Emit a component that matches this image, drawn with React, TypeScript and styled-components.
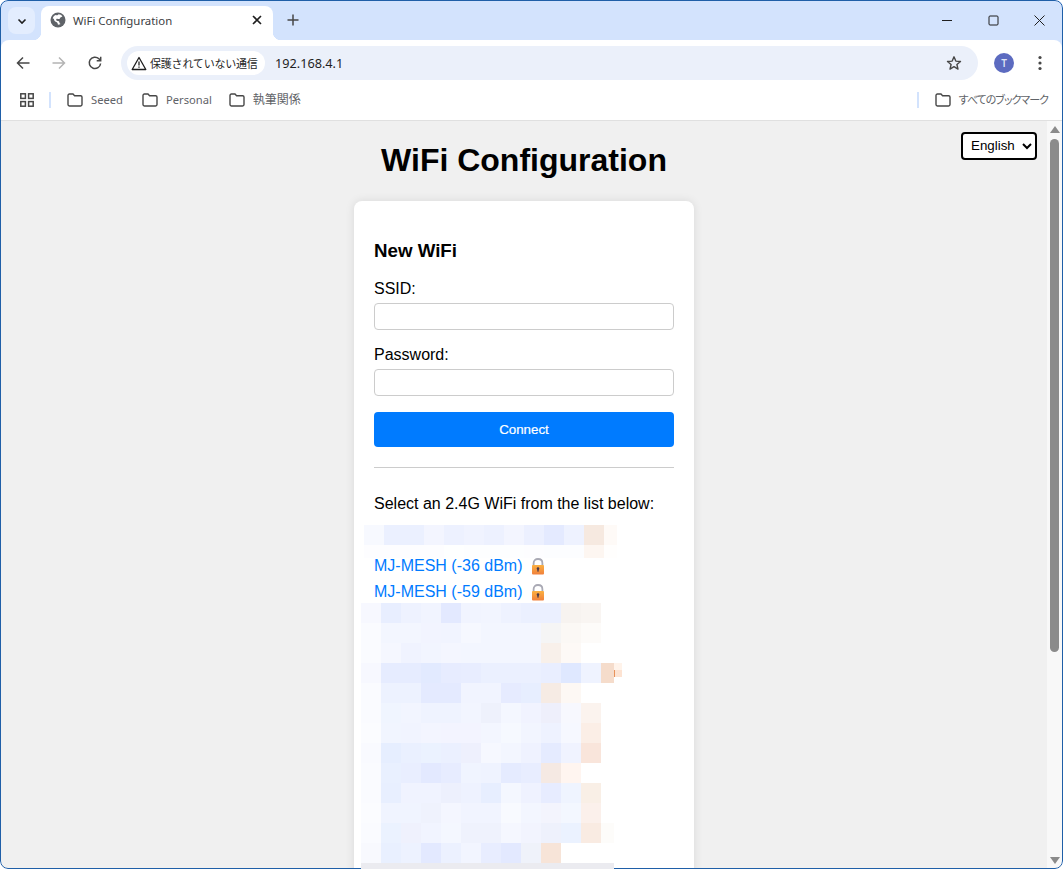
import React from 'react';
import styled, { createGlobalStyle } from 'styled-components';

const uiFont = `'Noto Sans', 'Open Sans', 'Noto Sans CJK JP', sans-serif`;
const pageFont = `'Liberation Sans', Arial, sans-serif`;

const GlobalStyle = createGlobalStyle`
  html, body {
    margin: 0;
    padding: 0;
    height: 869px;
    overflow: hidden;
    background: #fff;
  }
`;

const Window = styled.div`
  position: relative;
  width: 1063px;
  height: 869px;
  box-sizing: border-box;
  padding: 1px;
  border-radius: 8px;
  background: #d3e3fd;
  display: flex;
  flex-direction: column;
  overflow: hidden;
`;

const WindowFrame = styled.div`
  position: absolute;
  inset: 0;
  border: 1px solid #1f5fa8;
  border-radius: 8px;
  pointer-events: none;
  z-index: 1;
`;

const TitleBar = styled.div`
  height: 39px;
  flex: none;
  display: flex;
  align-items: flex-start;
`;

const TabMenu = styled.div`
  margin: 6px 0 0 7px;
  width: 27px;
  height: 27px;
  border-radius: 8px;
  background: #e3edfe;
  display: flex;
  align-items: center;
  justify-content: center;
`;

const Tab = styled.div`
  position: relative;
  margin: 5px 0 0 6px;
  width: 232px;
  height: 34px;
  box-sizing: border-box;
  padding: 0 11px 6px 9px;
  border-radius: 8px 8px 0 0;
  background: #fff;
  display: flex;
  align-items: center;
  font: 11.4px ${uiFont};
  color: #3c4043;

  &::before,
  &::after {
    content: '';
    position: absolute;
    bottom: 0;
    width: 8px;
    height: 8px;
  }
  &::before {
    left: -8px;
    background: radial-gradient(circle at 0 0, transparent 8px, #fff 8.5px);
  }
  &::after {
    right: -8px;
    background: radial-gradient(circle at 100% 0, transparent 8px, #fff 8.5px);
  }
`;

const TabTitle = styled.span`
  flex: 1;
  margin-left: 7px;
`;

const NewTab = styled.div`
  margin: 12px 0 0 13px;
  display: flex;
`;

const WindowControls = styled.div`
  margin-left: auto;
  display: flex;
`;

const WindowButton = styled.div`
  width: 46px;
  height: 39px;
  display: flex;
  align-items: center;
  justify-content: center;
`;

const Toolbar = styled.div`
  height: 40px;
  flex: none;
  background: #fff;
  border-radius: 8px 8px 0 0;
  display: flex;
  align-items: center;
  padding: 6px 0 0 14px;
  box-sizing: border-box;
`;

const NavIcon = styled.div`
  width: 36px;
  height: 24px;
  display: flex;
  align-items: center;
  justify-content: flex-start;
`;

const Omnibox = styled.div`
  margin-left: -2px;
  width: 857px;
  height: 34px;
  flex: none;
  box-sizing: border-box;
  padding: 0 16px 0 6px;
  border-radius: 17px;
  background: #ebf0fa;
  display: flex;
  align-items: center;
`;

const SecurityChip = styled.div`
  height: 24px;
  width: 138px;
  flex: none;
  box-sizing: border-box;
  padding-left: 4px;
  border-radius: 12px;
  background: #fff;
  display: flex;
  align-items: center;
  gap: 3px;
  font: 11px ${uiFont};
  letter-spacing: -0.2px;
  color: #1f1f1f;
  white-space: nowrap;

  svg {
    flex: none;
  }
`;

const Url = styled.span`
  margin-left: 10px;
  flex: 1;
  font: 12.7px ${uiFont};
  color: #1f1f1f;
`;

const Avatar = styled.div`
  margin-left: 16px;
  width: 20px;
  height: 20px;
  flex: none;
  border-radius: 50%;
  background: #5c6bc0;
  color: #dfe3f5;
  font: 600 10px/20px ${uiFont};
  text-align: center;
`;

const MoreButton = styled.div`
  margin-left: 24px;
  display: flex;
`;

const BookmarkBar = styled.div`
  height: 41px;
  flex: none;
  box-sizing: border-box;
  background: #fff;
  border-bottom: 1px solid #e0e0e0;
  display: flex;
  align-items: center;
  padding-left: 18px;
`;

const Separator = styled.div<{ $margin: string }>`
  width: 2px;
  height: 16px;
  background: #d3e3fd;
  margin: ${(p) => p.$margin};
`;

const Bookmark = styled.div<{ $gap: number; $size?: number; $tight?: boolean }>`
  display: flex;
  align-items: center;
  gap: 8px;
  margin-right: ${(p) => p.$gap}px;
  font: ${(p) => p.$size ?? 11.2}px/14px ${uiFont};
  font-feature-settings: ${(p) => (p.$tight ? "'palt'" : 'normal')};
  letter-spacing: ${(p) => (p.$tight ? '-1px' : 'normal')};
  color: #5f6368;
  white-space: nowrap;
`;

const Spacer = styled.div`
  flex: 1;
`;

const Viewport = styled.div`
  flex: 1;
  min-height: 0;
  display: flex;
  background: #f0f0f0;
`;

const Page = styled.div`
  position: relative;
  flex: 1;
  min-width: 0;
  font-family: ${pageFont};
  color: #000;
`;

const Heading = styled.h1`
  margin: 21px 0 0;
  font-size: 32px;
  line-height: 37px;
  font-weight: bold;
  text-align: center;
`;

const LanguageSelect = styled.select`
  position: absolute;
  top: 11px;
  right: 10px;
  width: 76px;
  height: 28px;
  border: 2px solid #000;
  border-radius: 4px;
  background: #fff;
  color: #000;
  font: 13.33px ${pageFont};
  padding: 0 0 2px 4px;
`;

const Card = styled.div`
  width: 340px;
  margin: 22px auto 0;
  box-sizing: border-box;
  padding: 38px 20px 0;
  height: 700px;
  background: #fff;
  border-radius: 8px;
  box-shadow: 0 0 10px rgba(0, 0, 0, 0.1);
`;

const FormTitle = styled.h2`
  margin: 0 0 18px;
  font-size: 18.72px;
  line-height: 23px;
  font-weight: bold;
`;

const FieldLabel = styled.label`
  display: block;
  font-size: 16px;
  line-height: 18px;
  margin-bottom: 5px;
`;

const TextInput = styled.input`
  display: block;
  width: 100%;
  height: 27px;
  box-sizing: border-box;
  border: 1px solid #ccc;
  border-radius: 4px;
  margin-bottom: 16px;
  background: #fff;
`;

const ConnectButton = styled.button`
  display: block;
  width: 100%;
  height: 35px;
  margin-top: 16px;
  border: none;
  border-radius: 4px;
  background: #007bff;
  color: #fff;
  font: 13.33px ${pageFont};
  -webkit-text-stroke: 0.2px #fff;
`;

const Divider = styled.hr`
  margin: 20px 0 0;
  border: none;
  border-top: 1px solid #ccc;
`;

const ListHint = styled.p`
  margin: 27px 0 12px;
  font-size: 16px;
  line-height: 18px;
`;

const Mosaic = styled.div<{ $left: number }>`
  position: relative;
  z-index: 2;
  margin-left: ${(p) => p.$left}px;
  display: flex;
  flex-direction: column;
`;

const MosaicRow = styled.div<{ $height: number }>`
  display: flex;
  height: ${(p) => p.$height}px;
`;

const MosaicCell = styled.div<{ $color: string; $width?: number }>`
  flex: none;
  width: ${(p) => p.$width ?? 20}px;
  background: #${(p) => p.$color};
`;

const MosaicNotch = styled.div`
  flex: none;
  width: 8px;
  height: 14px;
  display: flex;
  flex-direction: column;
`;

const NotchPiece = styled.div<{ $color: string; $edge?: boolean }>`
  height: 7px;
  background: #${(p) => p.$color};
  box-shadow: ${(p) => (p.$edge ? 'inset 1px 0 0 #e8925a' : 'none')};
`;

const NetworkList = styled.div`
  margin: -5px 0 -2px;
  position: relative;
`;

const NetworkLink = styled.a`
  display: flex;
  align-items: center;
  gap: 8px;
  height: 26px;
  font-size: 16px;
  color: #007bff;
  text-decoration: none;
`;

const Scrollbar = styled.div`
  width: 15px;
  flex: none;
  background: #f8f8f8;
  display: flex;
  flex-direction: column;
  align-items: center;
`;

const ScrollArrow = styled.div`
  height: 16px;
  flex: none;
  display: flex;
  align-items: center;
  justify-content: center;
`;

const ScrollThumb = styled.div`
  margin-top: 2px;
  width: 9px;
  height: 513px;
  flex: none;
  border-radius: 5px;
  background: #8b8b8b;
`;

const ScrollTrack = styled.div`
  flex: 1;
`;

const Folder = () => (
  <svg width="16" height="14" viewBox="0 0 16 14" fill="none" stroke="#474747" strokeWidth="1.4">
    <path d="M1 2.4C1 1.6 1.6 1 2.4 1H6l1.6 1.7h6c.8 0 1.4.6 1.4 1.4v7.5c0 .8-.6 1.4-1.4 1.4H2.4c-.8 0-1.4-.6-1.4-1.4z" />
  </svg>
);

const Lock = () => (
  <svg width="16" height="17" viewBox="0 0 16 17">
    <defs>
      <linearGradient id="lockBody" x1="0" y1="0" x2="0" y2="1">
        <stop offset="0" stopColor="#fbb040" />
        <stop offset="1" stopColor="#f0803c" />
      </linearGradient>
    </defs>
    <path d="M3.6 8V5.2C3.6 2.6 5.4 1 8 1s4.4 1.6 4.4 4.2V8" fill="none" stroke="#a9a9b4" strokeWidth="1.8" />
    <rect x="2" y="7" width="12" height="9.5" rx="1" fill="url(#lockBody)" />
    <circle cx="8" cy="10.6" r="1.3" fill="#4a3a4a" />
    <rect x="7.3" y="10.6" width="1.4" height="3" fill="#4a3a4a" />
  </svg>
);

const topMosaic: { height: number; cells: string[] }[] = [
  {
    height: 20,
    cells: ['f7f9ff', 'ebf0ff', 'ebf0ff', 'f3f5ff', 'edf1ff', 'f0f3ff', 'edf1ff', 'f3f5ff', 'ecf0ff', 'e4eaff', 'eef2ff', 'f6e9e0', 'fefaf7'],
  },
  {
    height: 13,
    cells: ['fdfdff', 'fdfdff', 'fdfdff', 'fdfdff', 'feffff', 'fdfeff', 'fdfeff', 'fdfeff', 'fdfdff', 'fcfdff', 'fcfdff', 'fdf6f1', 'fffefd'],
  },
];

const listMosaic: string[][] = [
  ['f7f8ff', 'e8eeff', 'eef2ff', 'f1f4ff', 'e3e9ff', 'f1f4ff', 'f2f5ff', 'eef2ff', 'ebf0ff', 'ebf0ff', 'f7f3f0', 'f9f5f2'],
  ['fafbff', 'f3f6ff', 'f3f6ff', 'f2f4ff', 'f1f4ff', 'f6f8ff', 'f3f6ff', 'f3f6ff', 'f3f6ff', 'f5f5f5', 'fbf8f5', 'fdfbf9'],
  ['fafbff', 'f5f7ff', 'f0f3ff', 'f2f5ff', 'f4f6ff', 'f3f6ff', 'f3f6ff', 'f3f6ff', 'f3f6ff', 'f8f0ea', 'fdf9f6', 'ffffff'],
  ['f7f8ff', 'e6ecff', 'e6ecff', 'e2eaff', 'e7ecff', 'e8edff', 'ebf0ff', 'ebf0ff', 'ebf0ff', 'e9eeff', 'dfe8ff', 'eff3ff', 'f5dccb'],
  ['fafbff', 'edf2ff', 'edf2ff', 'e4eaff', 'e4eaff', 'f1f4ff', 'f1f4ff', 'e6ebff', 'e7eeff', 'f6ebe4', 'fdf8f4', 'ffffff'],
  ['fafbff', 'f0f5ff', 'f2f5ff', 'eff3ff', 'eff3ff', 'f2f5ff', 'eef1fc', 'f4f7ff', 'f1f3ff', 'eeeffb', 'f7f8fe', 'fbf3ee'],
  ['fbfcff', 'f1f5ff', 'f1f4ff', 'f3f5ff', 'f3f4ff', 'f3f4ff', 'f3f6ff', 'f6f9ff', 'f2f5ff', 'eef2ff', 'f6f8ff', 'fbeee6'],
  ['f9faff', 'e6eeff', 'eaf0ff', 'ebf2ff', 'ebf0ff', 'eef0fd', 'f6f8ff', 'f3f6ff', 'eff2ff', 'e5ebff', 'f0f3ff', 'f9e5db'],
  ['fafbff', 'e9f0ff', 'e9eeff', 'e3e9ff', 'e7ecff', 'f0f4ff', 'eff3ff', 'e5ebff', 'e8edff', 'f5e9e3', 'fff5f0', 'ffffff'],
  ['fafbff', 'e8efff', 'f0f3ff', 'f0f3ff', 'edf0fd', 'eef2ff', 'e7eeff', 'f4f7ff', 'eff2ff', 'e7ecff', 'eff4ff', 'f9efe6'],
  ['fbfcff', 'f0f4ff', 'f0f4ff', 'eff2fd', 'f4f6ff', 'f1f4ff', 'f1f4ff', 'f8faff', 'f3f6ff', 'f3f4fd', 'f3f7ff', 'fbf0eb'],
  ['fafbff', 'ebf2ff', 'eff1fd', 'f1f4ff', 'f4f7ff', 'eff2fd', 'eff2fd', 'f5f7ff', 'f2f4fe', 'eef1fc', 'ebf2ff', 'f9ebe2', 'fdfcfa'],
  ['f8f9fe', 'e9f0ff', 'edf2ff', 'e3e9ff', 'ecf1ff', 'f2f5ff', 'e8edff', 'e3e9ff', 'eff2fa', 'f7e4d8', 'ffffff', 'ffffff'],
];

const App = (): JSX.Element => (
  <Window>
    <GlobalStyle />
    <WindowFrame />
    <TitleBar>
      <TabMenu>
        <svg width="12" height="12" viewBox="0 0 12 12" fill="none" stroke="#1f1f1f" strokeWidth="1.6">
          <path d="M2.5 4.5 6 8l3.5-3.5" />
        </svg>
      </TabMenu>
      <Tab>
        <svg width="16" height="16" viewBox="0 0 16 16">
          <circle cx="8" cy="8" r="7.5" fill="#5f6368" />
          <path d="M8.500 2.200c1.600.1 3 .9 3.900 2-.5.700-1.400.8-2 1.300-.5.500-.3 1.300-1 1.500-.9.200-1.700-.5-2.600-.2-.7.300-.8 1.200-.3 1.700.6.600 1.600.4 2.300.8.700.5.500 1.500 1 2.100l.8.700c-.8.500-1.700.7-2.600.7-.2-.9-.3-1.800-1-2.400-.7-.6-1.700-.6-2.300-1.300-.6-.7-.4-1.800-1.100-2.400-.3-.2-.6-.3-.9-.3.400-1.600 1.500-2.900 3-3.500.7.500 1.600.5 2.100 0 .3-.2.500-.4.700-.7z" fill="#fff" />
        </svg>
        <TabTitle>WiFi Configuration</TabTitle>
        <svg width="10" height="10" viewBox="0 0 10 10" fill="none" stroke="#1f1f1f" strokeWidth="1.6">
          <path d="M1 1l8 8M9 1 1 9" />
        </svg>
      </Tab>
      <NewTab>
        <svg width="14" height="14" viewBox="0 0 14 14" fill="none" stroke="#474747" strokeWidth="1.5">
          <path d="M7 1.500v11M1.500 7h11" />
        </svg>
      </NewTab>
      <WindowControls>
        <WindowButton>
          <svg width="11" height="11" viewBox="0 0 11 11" stroke="#1f1f1f" strokeWidth="1">
            <path d="M0 5.500h10" />
          </svg>
        </WindowButton>
        <WindowButton>
          <svg width="11" height="11" viewBox="0 0 11 11" fill="none" stroke="#1f1f1f" strokeWidth="1">
            <rect x="1" y="1" width="9" height="9" rx="1" />
          </svg>
        </WindowButton>
        <WindowButton>
          <svg width="11" height="11" viewBox="0 0 11 11" stroke="#1f1f1f" strokeWidth="1">
            <path d="M.5.500l10 10M10.500.500l-10 10" />
          </svg>
        </WindowButton>
      </WindowControls>
    </TitleBar>
    <Toolbar>
      <NavIcon>
        <svg width="16" height="16" viewBox="0 0 16 16" fill="none" stroke="#474747" strokeWidth="1.500">
          <path d="M14.500 8h-12M8 2.500 2.500 8 8 13.500" />
        </svg>
      </NavIcon>
      <NavIcon>
        <svg width="16" height="16" viewBox="0 0 16 16" fill="none" stroke="#b4b4b4" strokeWidth="1.500">
          <path d="M1.500 8h12M8 2.500 13.500 8 8 13.500" />
        </svg>
      </NavIcon>
      <NavIcon>
        <svg width="16" height="16" viewBox="0 0 16 16" fill="none" stroke="#474747" strokeWidth="1.500">
          <path d="M13.600 8.500A5.700 5.700 0 1 1 11.900 3.800L13.500 5.400" />
          <path d="M13.700 1.800v4h-4" />
        </svg>
      </NavIcon>
      <Omnibox>
        <SecurityChip>
          <svg width="16" height="15" viewBox="0 0 16 15" fill="none" stroke="#1f1f1f" strokeWidth="1.300">
            <path d="M8 1.500 14.800 13.500H1.200z" strokeLinejoin="round" />
            <path d="M8 5.500v4M8 10.500v1.300" />
          </svg>
          保護されていない通信
        </SecurityChip>
        <Url>192.168.4.1</Url>
        <svg width="16" height="16" viewBox="0 0 16 16" fill="none" stroke="#474747" strokeWidth="1.400">
          <path d="M8 1.800l1.800 4.300 4.700.4-3.600 3 1.100 4.600L8 11.600l-4 2.500 1.100-4.600-3.600-3 4.700-.4z" strokeLinejoin="round" />
        </svg>
      </Omnibox>
      <Avatar>T</Avatar>
      <MoreButton>
        <svg width="4" height="16" viewBox="0 0 4 16" fill="#474747">
          <circle cx="2" cy="2.500" r="1.600" />
          <circle cx="2" cy="8" r="1.600" />
          <circle cx="2" cy="13.500" r="1.600" />
        </svg>
      </MoreButton>
    </Toolbar>
    <BookmarkBar>
      <svg width="16" height="16" viewBox="0 0 16 16" fill="none" stroke="#474747" strokeWidth="1.500">
        <rect x="1.800" y="1.800" width="4.600" height="4.600" />
        <rect x="9.600" y="1.800" width="4.600" height="4.600" />
        <rect x="1.800" y="9.600" width="4.600" height="4.600" />
        <rect x="9.600" y="9.600" width="4.600" height="4.600" />
      </svg>
      <Separator $margin="0 16px 0 14px" />
      <Bookmark $gap={19}>
        <Folder />
        Seeed
      </Bookmark>
      <Bookmark $gap={17}>
        <Folder />
        Personal
      </Bookmark>
      <Bookmark $gap={0} $size={12}>
        <Folder />
        執筆関係
      </Bookmark>
      <Spacer />
      <Separator $margin="0 16px 0 0" />
      <Bookmark $gap={14} $size={11} $tight>
        <Folder />
        すべてのブックマーク
      </Bookmark>
    </BookmarkBar>
    <Viewport>
      <Page>
        <Heading>WiFi Configuration</Heading>
        <LanguageSelect defaultValue="en">
          <option value="en">English</option>
        </LanguageSelect>
        <Card>
          <FormTitle>New WiFi</FormTitle>
          <FieldLabel>SSID:</FieldLabel>
          <TextInput type="text" />
          <FieldLabel>Password:</FieldLabel>
          <TextInput type="password" />
          <ConnectButton>Connect</ConnectButton>
          <Divider />
          <ListHint>Select an 2.4G WiFi from the list below:</ListHint>
          <Mosaic $left={-10}>
            {topMosaic.map((row, r) => (
              <MosaicRow key={r} $height={row.height}>
                {row.cells.map((c, i) => (
                  <MosaicCell key={i} $color={c} $width={i === 12 ? 13 : 20} />
                ))}
              </MosaicRow>
            ))}
          </Mosaic>
          <NetworkList>
            <NetworkLink href="#">
              MJ-MESH (-36 dBm) <Lock />
            </NetworkLink>
            <NetworkLink href="#">
              MJ-MESH (-59 dBm) <Lock />
            </NetworkLink>
          </NetworkList>
          <Mosaic $left={-13}>
            {listMosaic.map((row, r) => (
              <MosaicRow key={r} $height={20}>
                {row.map((c, i) => (
                  <MosaicCell key={i} $color={c} $width={i === 12 ? 13 : 20} />
                ))}
                {r === 3 && (
                  <MosaicNotch>
                    <NotchPiece $color="fff3ea" />
                    <NotchPiece $color="fde3d2" $edge />
                  </MosaicNotch>
                )}
              </MosaicRow>
            ))}
            <MosaicRow $height={6}>
              <MosaicCell $color="ebebf0" $width={253} />
            </MosaicRow>
          </Mosaic>
        </Card>
      </Page>
      <Scrollbar>
        <ScrollArrow>
          <svg width="10" height="7" viewBox="0 0 10 7" fill="#8b8b8b">
            <path d="M5 0l5 7H0z" />
          </svg>
        </ScrollArrow>
        <ScrollThumb />
        <ScrollTrack />
        <ScrollArrow>
          <svg width="10" height="7" viewBox="0 0 10 7" fill="#8b8b8b">
            <path d="M0 0h10L5 7z" />
          </svg>
        </ScrollArrow>
      </Scrollbar>
    </Viewport>
  </Window>
);

export default App;
